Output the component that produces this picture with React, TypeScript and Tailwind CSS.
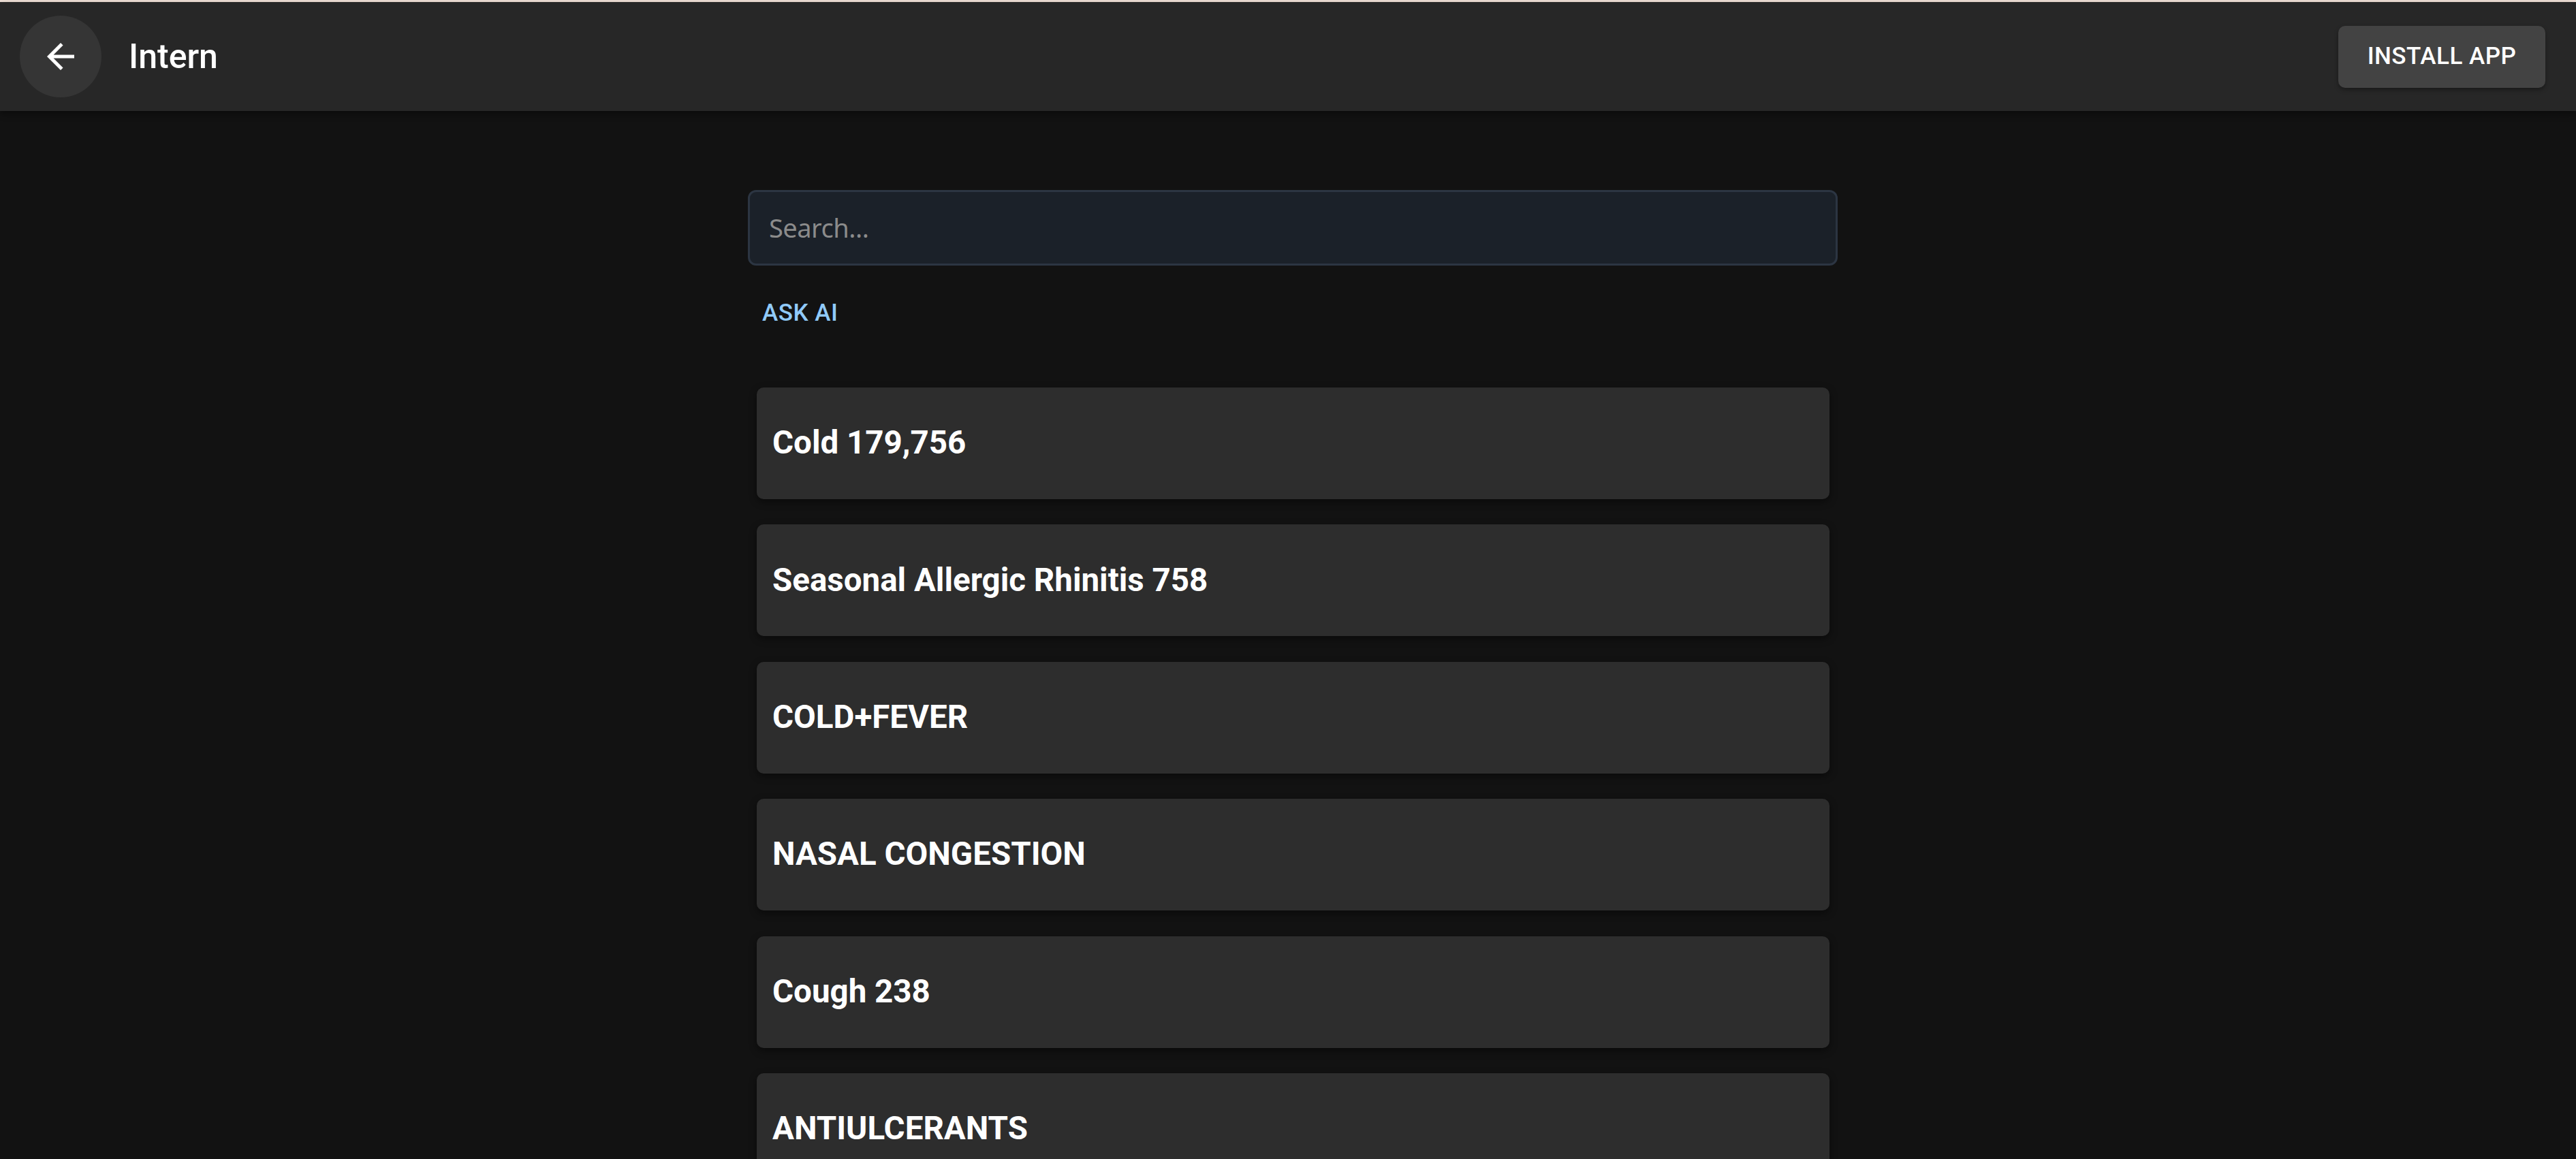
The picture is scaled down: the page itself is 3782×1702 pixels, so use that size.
const items = [
  "Cold 179,756",
  "Seasonal Allergic Rhinitis 758",
  "COLD+FEVER",
  "NASAL CONGESTION",
  "Cough 238",
  "ANTIULCERANTS",
];

function ArrowBack() {
  return (
    <svg viewBox="0 0 24 24" className="w-[60px] h-[60px]" fill="currentColor">
      <path d="M20 11H7.83l5.59-5.59L12 4l-8 8 8 8 1.41-1.41L7.83 13H20v-2z" />
    </svg>
  );
}

export default function App() {
  return (
    <div className="min-h-screen bg-[#121212] text-white font-['Roboto',sans-serif] overflow-hidden">
      {/* barra superior */}
      <div className="h-[3px] bg-[#f3e3da]" />
      <header className="h-[160px] bg-[#272727] flex items-center justify-between pl-[29px] pr-[45px] shadow-[0_4px_10px_rgba(0,0,0,0.4)]">
        <div className="flex items-center">
          <button className="w-[120px] h-[120px] rounded-full bg-[#353535] flex items-center justify-center text-white">
            <ArrowBack />
          </button>
          <h1 className="ml-[40px] text-[50px] font-medium leading-none">Intern</h1>
        </div>
        <button className="w-[304px] h-[91px] rounded-[10px] bg-[#434343] text-[35px] font-medium tracking-[0.5px] shadow-[0_3px_6px_rgba(0,0,0,0.35)]">
          INSTALL APP
        </button>
      </header>

      <main className="flex justify-center pl-[14px] pt-[116px]">
        <div className="w-[1600px] flex flex-col">
          <div className="h-[111px] rounded-[12px] border-[3px] border-[#2c3542] bg-[#1b2129] flex items-center pl-[28px]">
            <input
              placeholder="Search..."
              className="w-full bg-transparent outline-none text-[38px] tracking-[-0.5px] text-white placeholder:text-[#8b8b8b] font-['Noto_Sans',sans-serif]"
            />
          </div>

          <div className="mt-[25px]">
            <button className="h-[91px] px-[21px] text-[35px] font-medium text-[#90caf9] tracking-[0.5px]">
              ASK AI
            </button>
          </div>

          <div className="mt-[63px] pl-[13px] pr-[12px] flex flex-col gap-[37.4px]">
            {items.map((label) => (
              <div
                key={label}
                className="h-[164px] rounded-[10px] bg-[#2d2d2d] flex items-center px-[23px] shadow-[0_4px_12px_rgba(0,0,0,0.45)]"
              >
                <span className="text-[47.5px] font-bold leading-none">{label}</span>
              </div>
            ))}
          </div>
        </div>
      </main>
    </div>
  );
}
